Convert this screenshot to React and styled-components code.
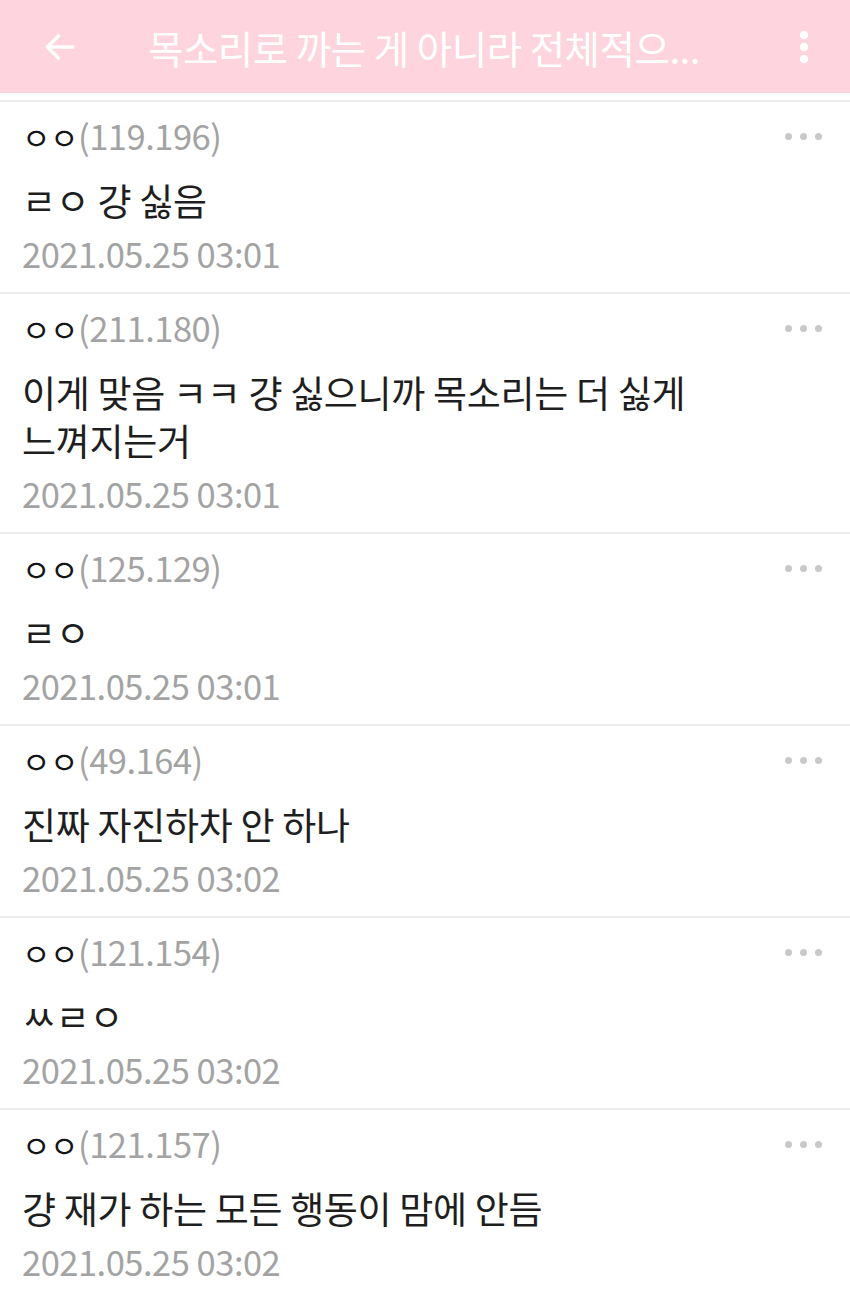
import React from 'react';
import styled, { createGlobalStyle } from 'styled-components';

const GlobalStyle = createGlobalStyle`
  body {
    margin: 0;
    background: #ffffff;
    font-family: "Noto Sans CJK KR", "Noto Sans", sans-serif;
  }
`;

const Page = styled.div`
  width: 850px;
  min-height: 1300px;
  background: #fff;
`;

const Header = styled.header`
  height: 93px;
  background: #fed4de;
  display: flex;
  align-items: center;
  padding: 0 24px 0 38px;
  box-sizing: border-box;
`;

const IconButton = styled.div`
  width: 44px;
  height: 44px;
  display: flex;
  align-items: center;
  justify-content: center;
`;

const Title = styled.h1`
  flex: 1;
  margin: 0 0 0 66px;
  color: #fff;
  font-size: 38.5px;
  font-weight: 400;
  letter-spacing: -0.5px;
  white-space: nowrap;
  overflow: hidden;
`;

const TopGap = styled.div`
  height: 7px;
  border-bottom: 2px solid #ececec;
`;

const List = styled.ul`
  list-style: none;
  margin: 0;
  padding: 0;
`;

const Item = styled.li`
  position: relative;
  padding: 11px 22px 17px 22px;
  border-bottom: 2px solid #ececec;
`;

const Name = styled.div`
  font-size: 31px;
  line-height: 44px;
  color: #141414;
  letter-spacing: -0.5px;
`;

const Ip = styled.span`
  font-size: 34.5px;
  color: #a3a3a3;
`;

const Body = styled.p`
  margin: 17px 120px 7px 0;
  font-size: 37px;
  line-height: 48px;
  color: #1e1e1e;
  letter-spacing: -0.3px;
  word-break: keep-all;
`;

const Date = styled.div`
  font-size: 34.5px;
  line-height: 44px;
  color: #a3a3a3;
  letter-spacing: -0.5px;
`;

const More = styled.div`
  position: absolute;
  top: 31px;
  right: 28px;
  display: flex;
  gap: 8px;
  span {
    width: 7px;
    height: 7px;
    border-radius: 50%;
    background: #c9c9c9;
  }
`;

const comments = [
  { ip: '119.196', text: 'ㄹㅇ 걍 싫음', date: '2021.05.25 03:01' },
  { ip: '211.180', text: '이게 맞음 ㅋㅋ 걍 싫으니까 목소리는 더 싫게 느껴지는거', date: '2021.05.25 03:01' },
  { ip: '125.129', text: 'ㄹㅇ', date: '2021.05.25 03:01' },
  { ip: '49.164', text: '진짜 자진하차 안 하나', date: '2021.05.25 03:02' },
  { ip: '121.154', text: 'ㅆㄹㅇ', date: '2021.05.25 03:02' },
  { ip: '121.157', text: '걍 재가 하는 모든 행동이 맘에 안듬', date: '2021.05.25 03:02' },
];

export default function App() {
  return (
    <Page>
      <GlobalStyle />
      <Header>
        <IconButton>
          <svg width="38" height="38" viewBox="0 0 24 24" fill="none" stroke="#fff" strokeWidth="2.2" strokeLinecap="round" strokeLinejoin="round">
            <path d="M20 12H5" />
            <path d="M11 5l-7 7 7 7" />
          </svg>
        </IconButton>
        <Title>목소리로 까는 게 아니라 전체적으...</Title>
        <IconButton>
          <svg width="12" height="34" viewBox="0 0 12 34" fill="#fff">
            <circle cx="6" cy="5" r="4.2" />
            <circle cx="6" cy="17" r="4.2" />
            <circle cx="6" cy="29" r="4.2" />
          </svg>
        </IconButton>
      </Header>
      <TopGap />
      <List>
        {comments.map((c, i) => (
          <Item key={i}>
            <Name>
              ㅇㅇ<Ip>({c.ip})</Ip>
            </Name>
            <Body>{c.text}</Body>
            <Date>{c.date}</Date>
            <More>
              <span />
              <span />
              <span />
            </More>
          </Item>
        ))}
      </List>
    </Page>
  );
}
